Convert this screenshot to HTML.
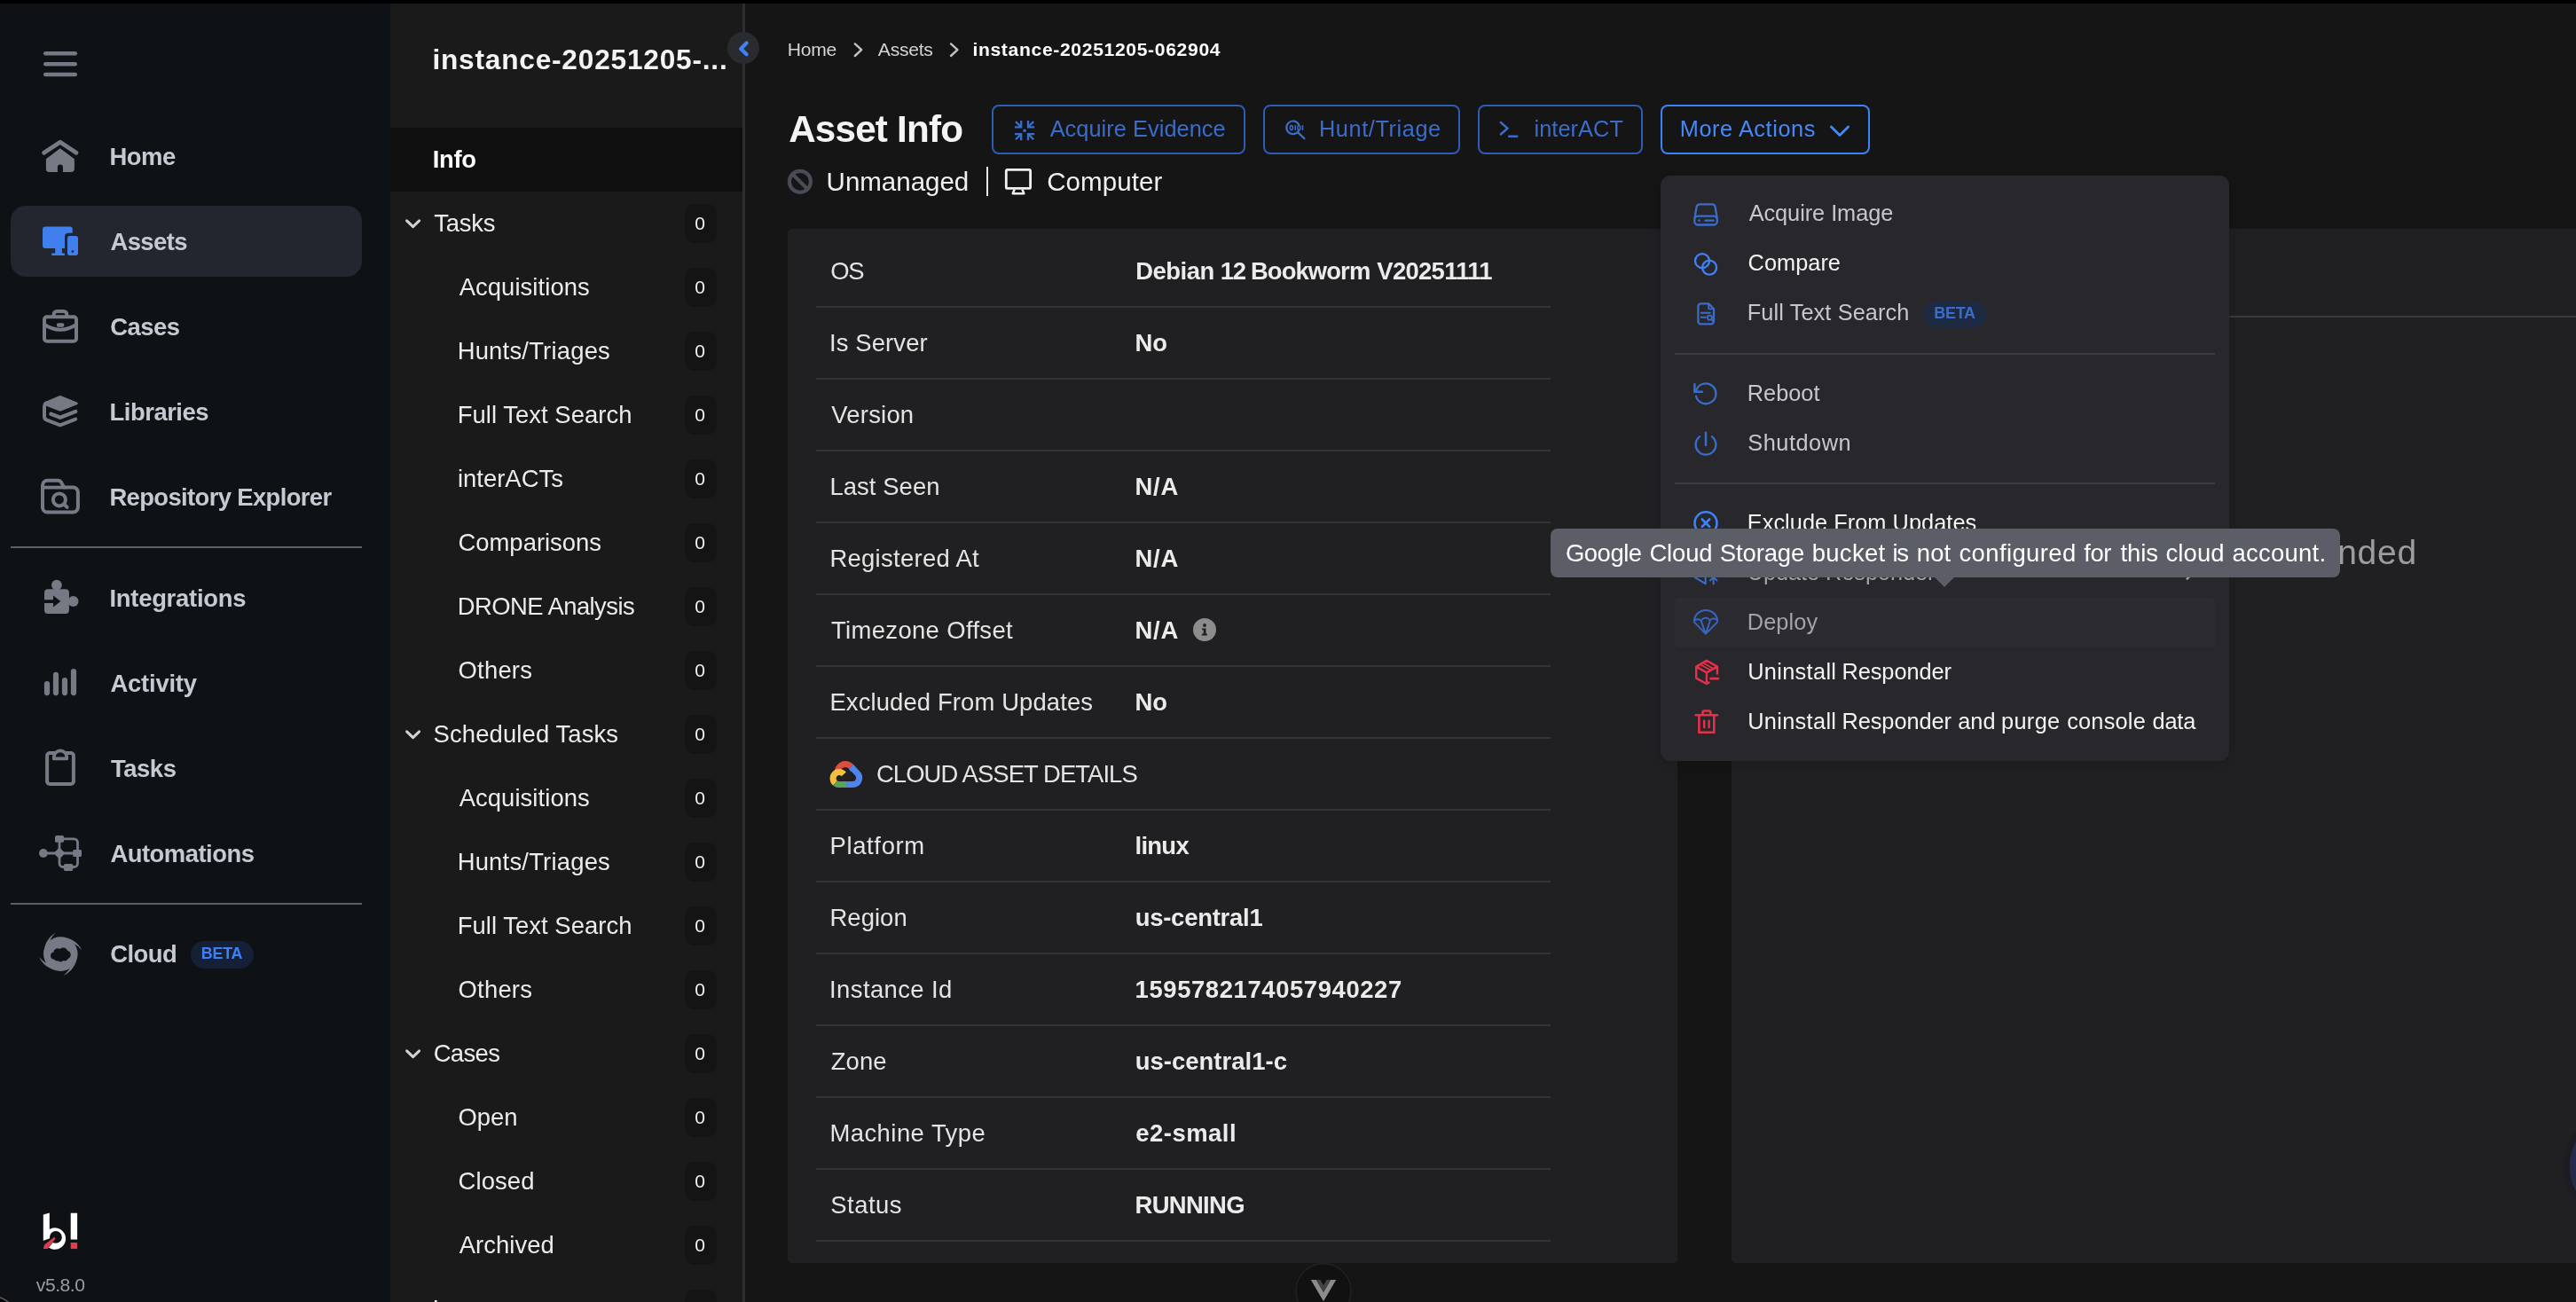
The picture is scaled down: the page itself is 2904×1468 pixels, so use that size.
<!DOCTYPE html>
<html lang="en"><head><meta charset="utf-8"><title>Asset Info</title>
<style>
*{box-sizing:border-box;margin:0;padding:0}
html,body{width:2904px;height:1468px;overflow:hidden;background:#151516}
body{font-family:"Liberation Sans",sans-serif;position:relative}
#root{position:absolute;left:0;top:0;width:2904px;height:1468px;overflow:hidden;background:#151516}
.abs{position:absolute}
.gl{position:absolute;left:0;top:0;width:2904px;height:1468px;will-change:transform}
.t{position:absolute;white-space:nowrap;line-height:1}
#side{position:absolute;left:0;top:0;width:440px;height:1468px;background:#0e1215}
#panel{position:absolute;left:440px;top:0;width:397px;height:1468px;background:#1a1a1b}
#vline{position:absolute;left:837px;top:0;width:3px;height:1468px;background:#2d2d32}
#topbar{position:absolute;left:0;top:0;width:2904px;height:4px;background:#000}
#inforow{position:absolute;left:440px;top:144px;width:397px;height:72px;background:#0f0f10}
.pill{position:absolute;left:12px;top:232px;width:396px;height:79.5px;border-radius:17px;background:#23262e}
.sdiv{position:absolute;left:12px;width:396px;height:2.4px;background:#5c5f6a}
.badge{position:absolute;left:772px;width:36px;height:44px;border-radius:10px;background:#141414}
.beta{position:absolute;border-radius:16px}
.btn{position:absolute;top:118px;height:55.5px;border:2px solid #2d5cb3;border-radius:8px}
.card{position:absolute;top:258px;height:1166px;background:#202022;border-radius:5px}
.hl{position:absolute;left:920px;width:828px;height:2px;background:#333439}
#dd{position:absolute;left:1872px;top:198px;width:641px;height:660px;border-radius:11px;background:#27272c;box-shadow:0 4px 14px rgba(0,0,0,.18)}
.sep{position:absolute;left:1888px;width:609px;height:2px;background:#3b3b41}
#hov{position:absolute;left:1888px;top:674px;width:609px;height:56.4px;border-radius:5px;background:#2b2b30}
#tip{position:absolute;left:1748px;top:595.8px;width:890px;height:55px;border-radius:8px;background:#5b5e67}
#tiparrow{position:absolute;left:2180px;top:650.3px;width:0;height:0;border-left:12.5px solid transparent;border-right:12.5px solid transparent;border-top:12.5px solid #5b5e67}
</style></head>
<body><div id="root">
<div id="side"></div>
<div id="panel"></div>
<div id="inforow"></div>
<div class="pill"></div>
<div class="sdiv" style="top:616px"></div>
<div class="sdiv" style="top:1017.6px"></div>
<div class="beta" style="left:215px;top:1061px;width:71px;height:31px;background:#152036"></div>
<div class="badge" style="top:229.8px"></div>
<svg class="abs" style="left:455px;top:246.2px" width="22" height="14" viewBox="0 0 22 14"><path d="M3.6 2.8 L10.6 9.6 L17.6 2.8" fill="none" stroke="#d2d2d2" stroke-width="3" stroke-linecap="round" stroke-linejoin="round"/></svg>
<div class="badge" style="top:301.8px"></div>
<div class="badge" style="top:373.8px"></div>
<div class="badge" style="top:445.8px"></div>
<div class="badge" style="top:517.8px"></div>
<div class="badge" style="top:589.8px"></div>
<div class="badge" style="top:661.8px"></div>
<div class="badge" style="top:733.8px"></div>
<div class="badge" style="top:805.8px"></div>
<svg class="abs" style="left:455px;top:822.2px" width="22" height="14" viewBox="0 0 22 14"><path d="M3.6 2.8 L10.6 9.6 L17.6 2.8" fill="none" stroke="#d2d2d2" stroke-width="3" stroke-linecap="round" stroke-linejoin="round"/></svg>
<div class="badge" style="top:877.8px"></div>
<div class="badge" style="top:949.8px"></div>
<div class="badge" style="top:1021.8px"></div>
<div class="badge" style="top:1093.8px"></div>
<div class="badge" style="top:1165.8px"></div>
<svg class="abs" style="left:455px;top:1182.2px" width="22" height="14" viewBox="0 0 22 14"><path d="M3.6 2.8 L10.6 9.6 L17.6 2.8" fill="none" stroke="#d2d2d2" stroke-width="3" stroke-linecap="round" stroke-linejoin="round"/></svg>
<div class="badge" style="top:1237.8px"></div>
<div class="badge" style="top:1309.8px"></div>
<div class="badge" style="top:1381.8px"></div>
<div class="badge" style="top:1453.8px"></div>
<svg class="abs" style="left:455px;top:1470.2px" width="22" height="14" viewBox="0 0 22 14"><path d="M3.6 2.8 L10.6 9.6 L17.6 2.8" fill="none" stroke="#d2d2d2" stroke-width="3" stroke-linecap="round" stroke-linejoin="round"/></svg>
<div class="card" style="left:888px;width:1003px"></div>
<div class="card" style="left:1952px;width:1000px"></div>
<div class="abs" style="left:1952px;top:356px;width:960px;height:2px;background:#38393d"></div>
<div class="hl" style="top:345px"></div>
<div class="hl" style="top:426px"></div>
<div class="hl" style="top:507px"></div>
<div class="hl" style="top:588px"></div>
<div class="hl" style="top:669px"></div>
<div class="hl" style="top:750px"></div>
<div class="hl" style="top:831px"></div>
<div class="hl" style="top:912px"></div>
<div class="hl" style="top:993px"></div>
<div class="hl" style="top:1074px"></div>
<div class="hl" style="top:1155px"></div>
<div class="hl" style="top:1236px"></div>
<div class="hl" style="top:1317px"></div>
<div class="hl" style="top:1398px"></div>
<div class="btn" style="left:1118px;width:285.6px"></div>
<div class="btn" style="left:1424px;width:222px"></div>
<div class="btn" style="left:1666px;width:186px"></div>
<div class="btn" style="left:1872px;width:236px;border-color:#3b82f6"></div>
<div class="abs" style="left:1111.6px;top:188px;width:2.5px;height:33.4px;background:#e8e8e8"></div>
<svg class="abs" style="left:0;top:0" width="2904" height="1468" viewBox="0 0 2904 1468" fill="none">
<rect x="49" y="58" width="38" height="4.6" rx="2.3" fill="#767a85"/>
<rect x="49" y="69.9" width="38" height="4.6" rx="2.3" fill="#767a85"/>
<rect x="49" y="81.7" width="38" height="4.6" rx="2.3" fill="#767a85"/>
<path d="M49.6 172.2 L67.8 160.2 L86 172.2" stroke="#767a85" stroke-width="4.8" stroke-linecap="round" stroke-linejoin="round"/>
<path d="M51.9 179.2 L67.8 167.2 L83.9 179.2 V190.2 a3.8 3.8 0 0 1 -3.8 3.8 H70.9 V188.6 a3 3 0 0 0 -6 0 V194 H55.7 a3.8 3.8 0 0 1 -3.8 -3.8 Z" fill="#767a85"/>
<rect x="48" y="255.6" width="33.8" height="24.4" rx="3.2" fill="#3f7fee"/>
<path d="M62.2 280 h7.7 v5.6 h3 v2.4 h-14.6 v-2.4 h3.9 z" fill="#3f7fee"/>
<rect x="73" y="262.8" width="18" height="28" rx="4" fill="#23262e"/>
<rect x="76" y="265.9" width="12" height="22" rx="2.6" fill="#3f7fee"/>
<rect x="80.6" y="282.2" width="2.6" height="2.6" rx="0.8" fill="#23262e"/>
<rect x="50" y="357.2" width="36" height="27.6" rx="3" stroke="#767a85" stroke-width="4"/>
<path d="M60.6 356 V354.5 a3.5 3.5 0 0 1 3.5 -3.5 h7.7 a3.5 3.5 0 0 1 3.5 3.5 V356" stroke="#767a85" stroke-width="4"/>
<path d="M50 366 Q68 377.5 86 366" stroke="#767a85" stroke-width="4"/>
<rect x="63.8" y="364.3" width="8.6" height="4.4" rx="2.2" fill="#767a85"/>
<path d="M67.8 446.8 L86.4 454.2 Q87.6 454.9 86.4 455.6 L69 462.6 Q67.8 463 66.6 462.6 L50.6 456.4 Q49 455.2 50.6 454 Z" fill="#767a85" stroke="#767a85" stroke-width="1.5" stroke-linejoin="round"/>
<path d="M52 454.5 Q50 456 50 459 V469.5 Q50 472.5 52.8 473.6 L67.8 479.4 L85.2 472.6" stroke="#767a85" stroke-width="4" stroke-linecap="round" stroke-linejoin="round"/>
<path d="M57.5 466.8 L67.8 470.8 L85.2 464" stroke="#767a85" stroke-width="4.4" stroke-linecap="round" stroke-linejoin="round"/>
<path d="M48 572.4 V547.2 a5.5 5.5 0 0 1 5.5 -5.5 h12 a4 4 0 0 1 3.4 1.9 l3.2 5.9 h10.3 a5.5 5.5 0 0 1 5.5 5.5 v17 a5.5 5.5 0 0 1 -5.5 5.5 h-28.9 a5.500 5.500 0 0 1 -5.5 -5.500 Z" stroke="#767a85" stroke-width="4" stroke-linejoin="round"/>
<path d="M48 549.6 H74" stroke="#767a85" stroke-width="3.8"/>
<circle cx="66.9" cy="563.4" r="7" stroke="#767a85" stroke-width="4"/>
<path d="M72 568.6 L75.6 571.8" stroke="#767a85" stroke-width="4" stroke-linecap="round"/>
<rect x="50" y="664.2" width="27.9" height="27.8" rx="4" fill="#767a85"/>
<circle cx="63.9" cy="659.6" r="5.9" fill="#767a85"/>
<circle cx="82.6" cy="678" r="5.9" fill="#767a85"/>
<path d="M49 676.2 H60 V671.4 L68.4 678 L60 684.6 V679.9 H49 Z" fill="#0e1215"/>
<rect x="49.9" y="767.9" width="6.2" height="16.3" rx="3.1" fill="#767a85"/>
<rect x="59.9" y="757.8" width="6.2" height="26.4" rx="3.1" fill="#767a85"/>
<rect x="69.9" y="764" width="6.2" height="20.2" rx="3.1" fill="#767a85"/>
<rect x="79.9" y="753.9" width="6.2" height="30.3" rx="3.1" fill="#767a85"/>
<rect x="53.1" y="849.1" width="29.8" height="34.9" rx="3" stroke="#767a85" stroke-width="4"/>
<path d="M60.8 855.4 V853.6 a7.2 7.2 0 0 1 14.4 0 V855.4 Z" stroke="#767a85" stroke-width="3.8" stroke-linejoin="round" fill="#0e1215"/>
<circle cx="48.9" cy="962" r="4.9" fill="#767a85"/>
<path d="M48.9 962 H87" stroke="#767a85" stroke-width="2.8"/>
<path d="M67 945.8 V973.5 a4 4 0 0 0 4 4 H83.5 a4 4 0 0 0 4 -4 V949.8 a4 4 0 0 0 -4 -4 H67" stroke="#767a85" stroke-width="2.8"/>
<rect x="62.3" y="957.3" width="9.4" height="9.4" rx="0.8" transform="rotate(45 67 962)" fill="#767a85" />
<rect x="62" y="942" width="10" height="7.8" rx="1.6" fill="#767a85"/>
<rect x="82.2" y="958" width="9.8" height="8" rx="1.6" fill="#767a85"/>
<rect x="71.9" y="973.9" width="10.3" height="8" rx="1.6" fill="#767a85"/>
<circle cx="68.3" cy="1075.6" r="19.3" fill="#767a85"/>
<path d="M49.61 1076.25 L49.57 1074.43 L49.63 1072.60 L49.81 1070.74 L50.12 1068.88 L50.58 1067.01 L51.19 1065.15 L51.96 1063.29 L52.91 1061.46 L54.03 1059.67 L55.33 1057.93 L56.82 1056.27 L58.49 1054.70 L60.35 1053.25 L62.40 1051.92 L61.70 1052.80 L61.02 1053.58 L60.38 1054.33 L59.77 1055.07 L59.20 1055.82 L58.66 1056.57 L58.17 1057.32 L57.71 1058.07 L57.28 1058.82 L56.90 1059.57 L56.55 1060.33 L56.24 1061.08 L55.97 1061.83 L55.73 1062.58 Z" fill="#767a85"/>
<path d="M68.63 1056.90 L70.45 1056.96 L72.28 1057.11 L74.12 1057.39 L75.96 1057.80 L77.80 1058.35 L79.64 1059.06 L81.45 1059.93 L83.23 1060.97 L84.96 1062.18 L86.62 1063.57 L88.20 1065.14 L89.68 1066.90 L91.04 1068.83 L92.25 1070.94 L91.41 1070.20 L90.67 1069.49 L89.96 1068.80 L89.24 1068.15 L88.53 1067.54 L87.81 1066.97 L87.09 1066.44 L86.36 1065.94 L85.63 1065.48 L84.90 1065.05 L84.17 1064.67 L83.43 1064.32 L82.69 1064.00 L81.96 1063.73 Z" fill="#767a85"/>
<path d="M86.95 1076.90 L86.80 1078.72 L86.55 1080.54 L86.18 1082.36 L85.67 1084.18 L85.02 1085.99 L84.22 1087.79 L83.26 1089.55 L82.13 1091.27 L80.83 1092.94 L79.35 1094.53 L77.70 1096.02 L75.87 1097.41 L73.87 1098.66 L71.70 1099.76 L72.48 1098.96 L73.24 1098.26 L73.96 1097.58 L74.64 1096.90 L75.29 1096.22 L75.90 1095.54 L76.47 1094.84 L77.00 1094.14 L77.50 1093.44 L77.96 1092.73 L78.39 1092.02 L78.78 1091.30 L79.13 1090.58 L79.44 1089.86 Z" fill="#767a85"/>
<path d="M67.00 1094.25 L65.18 1094.10 L63.36 1093.85 L61.54 1093.48 L59.72 1092.97 L57.91 1092.32 L56.11 1091.52 L54.35 1090.56 L52.63 1089.43 L50.96 1088.13 L49.37 1086.65 L47.88 1085.00 L46.49 1083.17 L45.24 1081.17 L44.14 1079.00 L44.94 1079.78 L45.64 1080.54 L46.32 1081.26 L47.00 1081.94 L47.68 1082.59 L48.36 1083.20 L49.06 1083.77 L49.76 1084.30 L50.46 1084.80 L51.17 1085.26 L51.88 1085.69 L52.60 1086.08 L53.32 1086.43 L54.04 1086.74 Z" fill="#767a85"/>
<path d="M61.2 1081.8 a4.2 4.2 0 0 1 -0.8 -8.3 a4.6 4.6 0 0 1 7 -3.4 a5.2 5.2 0 0 1 8.8 2 a4.6 4.6 0 0 1 0.4 8.8 a3.8 3.8 0 0 1 -5 2.2 a4.6 4.6 0 0 1 -6 0.2 a3.8 3.8 0 0 1 -4.400 -1.500 Z" fill="#0e1215"/>
<path d="M48.8 1369.6 L55.8 1367.6 V1386 a12.2 12.2 0 1 1 -3.600 18.0 L48.8 1400 Z" fill="#ffffff"/>
<circle cx="62.9" cy="1394.9" r="6.9" fill="#0e1215"/>
<path d="M47 1399.6 L62.5 1394 L63.8 1396 L52.5 1409.5 L47 1409.5 Z" fill="#0e1215"/>
<path d="M48.8 1408 L50 1403.4 L61.2 1394.8 L62.6 1396.4 L53.8 1408 Z" fill="#d8404f"/>
<rect x="79.7" y="1367.7" width="7.4" height="29.8" fill="#ffffff"/>
<rect x="79.7" y="1401" width="7.4" height="7.1" fill="#d8404f"/>
<path d="M963.8000000000001 49.4 L971.2 56.2 L963.8000000000001 63" stroke="#c2c2c2" stroke-width="2.4" stroke-linecap="round" stroke-linejoin="round"/>
<path d="M1072.0 49.4 L1079.3999999999999 56.2 L1072.0 63" stroke="#c2c2c2" stroke-width="2.4" stroke-linecap="round" stroke-linejoin="round"/>
<path d="M1144.00 143.30 H1151.20 V136.10 M1151.20 143.30 L1145.00 137.10" stroke="#3a6dcb" stroke-width="2.3" stroke-linecap="butt" stroke-linejoin="miter"/>
<path d="M1144.00 151.10 H1151.20 V158.30 M1151.20 151.10 L1145.00 157.30" stroke="#3a6dcb" stroke-width="2.3" stroke-linecap="butt" stroke-linejoin="miter"/>
<path d="M1166.20 143.30 H1159.00 V136.10 M1159.00 143.30 L1165.20 137.10" stroke="#3a6dcb" stroke-width="2.3" stroke-linecap="butt" stroke-linejoin="miter"/>
<path d="M1166.20 151.10 H1159.00 V158.30 M1159.00 151.10 L1165.20 157.30" stroke="#3a6dcb" stroke-width="2.3" stroke-linecap="butt" stroke-linejoin="miter"/>
<circle cx="1155.1" cy="147.2" r="1.8" fill="#3a6dcb"/>
<path d="M1464.22 146.89 A7.30 7.30 0 1 1 1464.05 140.37" stroke="#3a6dcb" stroke-width="2.2" stroke-linecap="round"/>
<path d="M1463.4 149.6 L1470.4 156.2" stroke="#3a6dcb" stroke-width="2.3" stroke-linecap="round"/>
<ellipse cx="1455.9" cy="144" rx="1.5" ry="2.6" stroke="#3a6dcb" stroke-width="1.5"/>
<path d="M1460.2 141.2 V146.8" stroke="#3a6dcb" stroke-width="1.6"/>
<ellipse cx="1464.4" cy="144" rx="1.5" ry="2.6" stroke="#3a6dcb" stroke-width="1.5"/>
<path d="M1468.5 141.2 V146.8" stroke="#3a6dcb" stroke-width="1.6"/>
<path d="M1691.8 138 L1699.4 144.7 L1691.8 151.5" stroke="#3a6dcb" stroke-width="2.4" stroke-linecap="round" stroke-linejoin="miter"/>
<path d="M1701.2 153.7 H1710.2" stroke="#3a6dcb" stroke-width="2.6" stroke-linecap="round"/>
<path d="M2064.4 143 L2074 152.4 L2083.6 143" stroke="#4489f7" stroke-width="2.8" stroke-linecap="round" stroke-linejoin="round"/>
<circle cx="901.9" cy="204.8" r="12" stroke="#4a4c55" stroke-width="4.2"/>
<path d="M893.4 196.3 L910.4 213.3" stroke="#4a4c55" stroke-width="4.2"/>
<rect x="1134.3" y="191.3" width="27.3" height="21.100" rx="1.5" stroke="#f0f0f0" stroke-width="2.8"/>
<path d="M1143.6 213.6 L1141.8 218.3 H1154.3 L1152.500 213.6" stroke="#f0f0f0" stroke-width="2.600" stroke-linejoin="round"/>
<circle cx="1358" cy="710" r="13" fill="#8c8c8c"/>
<circle cx="1358" cy="705" r="1.9" fill="#202022"/>
<path d="M1355 708.400 H1359.500 V714.600 H1360.800 V716.400 H1354.900 V714.600 H1356.700 V710.200 H1355 Z" fill="#202022"/>
<path d="M944.43 871.71 A8.70 8.70 0 0 1 959.66 864.61" stroke="#db4f3d" stroke-width="7"/>
<path d="M959.57 864.49 A8.70 8.70 0 0 1 961.62 868.99" stroke="#4f84ec" stroke-width="7"/>
<path d="M959.66 864.61 L966.02 871.35 A7.5 7.5 0 0 1 961.20 884.60 H954.10" stroke="#4f84ec" stroke-width="7" stroke-linejoin="round"/>
<path d="M954.20 884.60 H946.10 A7 7 0 0 1 941.79 883.12" stroke="#57a55c" stroke-width="7"/>
<path d="M941.60 882.96 A7.00 7.00 0 1 1 951.30 872.92" stroke="#f4bf3f" stroke-width="7"/>
<circle cx="1492" cy="1455.8" r="31" fill="#111111" stroke="#232323" stroke-width="1.4"/>
<path d="M1477.8 1443 H1483.800 L1492 1457 L1500.200 1443 H1506.200 L1492 1467.200 Z" fill="#8c8c8c"/>
<path d="M1483.8 1443 H1488.400 L1492 1449.200 L1495.600 1443 H1500.200 L1492 1457 Z" fill="#444444"/>
<circle cx="2954" cy="1315" r="64" fill="#1c1d22"/>
<circle cx="2954" cy="1315" r="57.3" fill="#222b49"/>
<path d="M-1 1462.6 Q5 1464.6 10.5 1469 L-1 1469 Z" fill="#000"/>
<path d="M-1 1462.6 Q5 1464.6 10.5 1469" stroke="#5a5c60" stroke-width="1.6"/>
</svg>
<div class="gl"><span id="t0" class="t" style="left:123.45px;top:162.82px;font-size:27.43px;font-weight:700;color:#c6c9d2;letter-spacing:-0.458px;">Home</span>
<span id="t1" class="t" style="left:124.42px;top:258.82px;font-size:27.43px;font-weight:700;color:#c6c9d2;letter-spacing:-0.559px;">Assets</span>
<span id="t2" class="t" style="left:124.23px;top:354.82px;font-size:27.43px;font-weight:700;color:#c6c9d2;letter-spacing:-0.537px;">Cases</span>
<span id="t3" class="t" style="left:123.45px;top:450.82px;font-size:27.43px;font-weight:700;color:#c6c9d2;letter-spacing:-0.463px;">Libraries</span>
<span id="t4" class="t" style="left:123.45px;top:546.82px;font-size:27.43px;font-weight:700;color:#c6c9d2;letter-spacing:-0.632px;">Repository Explorer</span>
<span id="t5" class="t" style="left:123.45px;top:660.72px;font-size:27.43px;font-weight:700;color:#c6c9d2;letter-spacing:-0.263px;">Integrations</span>
<span id="t6" class="t" style="left:124.42px;top:756.72px;font-size:27.43px;font-weight:700;color:#c6c9d2;letter-spacing:-0.205px;">Activity</span>
<span id="t7" class="t" style="left:125.07px;top:852.72px;font-size:27.43px;font-weight:700;color:#c6c9d2;letter-spacing:-0.468px;">Tasks</span>
<span id="t8" class="t" style="left:124.42px;top:948.72px;font-size:27.43px;font-weight:700;color:#c6c9d2;letter-spacing:-0.508px;">Automations</span>
<span id="t9" class="t" style="left:124.23px;top:1062.42px;font-size:27.43px;font-weight:700;color:#c6c9d2;letter-spacing:-0.563px;">Cloud</span>
<span id="t10" class="t" style="left:226.68px;top:1067.39px;font-size:17.93px;font-weight:700;color:#3b82f6;letter-spacing:-0.194px;">BETA</span>
<span id="t11" class="t" style="left:40.84px;top:1438.40px;font-size:21.1px;font-weight:400;color:#9a9da6;letter-spacing:-0.456px;">v5.8.0</span>
<span id="t12" class="t" style="left:487.38px;top:52.40px;font-size:31.65px;font-weight:700;color:#f4f4f4;letter-spacing:0.787px;">instance-20251205-...</span>
<span id="t13" class="t" style="left:487.65px;top:165.52px;font-size:27.43px;font-weight:700;color:#ffffff;letter-spacing:-0.270px;">Info</span>
<span id="t14" class="t" style="left:489.37px;top:237.82px;font-size:27.43px;font-weight:400;color:#ececec;letter-spacing:-0.261px;">Tasks</span>
<span id="t15" class="t" style="left:783.14px;top:241.30px;font-size:21.1px;font-weight:400;color:#f0f0f0;letter-spacing:0.000px;">0</span>
<span id="t16" class="t" style="left:517.65px;top:309.82px;font-size:27.43px;font-weight:400;color:#ececec;letter-spacing:0.070px;">Acquisitions</span>
<span id="t17" class="t" style="left:783.14px;top:313.30px;font-size:21.1px;font-weight:400;color:#f0f0f0;letter-spacing:0.000px;">0</span>
<span id="t18" class="t" style="left:515.65px;top:381.82px;font-size:27.43px;font-weight:400;color:#ececec;letter-spacing:0.208px;">Hunts/Triages</span>
<span id="t19" class="t" style="left:783.14px;top:385.30px;font-size:21.1px;font-weight:400;color:#f0f0f0;letter-spacing:0.000px;">0</span>
<span id="t20" class="t" style="left:515.65px;top:453.82px;font-size:27.43px;font-weight:400;color:#ececec;letter-spacing:0.050px;">Full Text Search</span>
<span id="t21" class="t" style="left:783.14px;top:457.30px;font-size:21.1px;font-weight:400;color:#f0f0f0;letter-spacing:0.000px;">0</span>
<span id="t22" class="t" style="left:515.95px;top:525.82px;font-size:27.43px;font-weight:400;color:#ececec;letter-spacing:0.013px;">interACTs</span>
<span id="t23" class="t" style="left:783.14px;top:529.30px;font-size:21.1px;font-weight:400;color:#f0f0f0;letter-spacing:0.000px;">0</span>
<span id="t24" class="t" style="left:516.48px;top:597.82px;font-size:27.43px;font-weight:400;color:#ececec;letter-spacing:0.003px;">Comparisons</span>
<span id="t25" class="t" style="left:783.14px;top:601.30px;font-size:21.1px;font-weight:400;color:#f0f0f0;letter-spacing:0.000px;">0</span>
<span id="t26" class="t" style="left:515.65px;top:669.82px;font-size:27.43px;font-weight:400;color:#ececec;letter-spacing:-0.554px;">DRONE Analysis</span>
<span id="t27" class="t" style="left:783.14px;top:673.30px;font-size:21.1px;font-weight:400;color:#f0f0f0;letter-spacing:0.000px;">0</span>
<span id="t28" class="t" style="left:516.57px;top:741.82px;font-size:27.43px;font-weight:400;color:#ececec;letter-spacing:0.209px;">Others</span>
<span id="t29" class="t" style="left:783.14px;top:745.30px;font-size:21.1px;font-weight:400;color:#f0f0f0;letter-spacing:0.000px;">0</span>
<span id="t30" class="t" style="left:488.60px;top:813.82px;font-size:27.43px;font-weight:400;color:#ececec;letter-spacing:0.117px;">Scheduled Tasks</span>
<span id="t31" class="t" style="left:783.14px;top:817.30px;font-size:21.1px;font-weight:400;color:#f0f0f0;letter-spacing:0.000px;">0</span>
<span id="t32" class="t" style="left:517.65px;top:885.82px;font-size:27.43px;font-weight:400;color:#ececec;letter-spacing:0.070px;">Acquisitions</span>
<span id="t33" class="t" style="left:783.14px;top:889.30px;font-size:21.1px;font-weight:400;color:#f0f0f0;letter-spacing:0.000px;">0</span>
<span id="t34" class="t" style="left:515.65px;top:957.82px;font-size:27.43px;font-weight:400;color:#ececec;letter-spacing:0.208px;">Hunts/Triages</span>
<span id="t35" class="t" style="left:783.14px;top:961.30px;font-size:21.1px;font-weight:400;color:#f0f0f0;letter-spacing:0.000px;">0</span>
<span id="t36" class="t" style="left:515.65px;top:1029.82px;font-size:27.43px;font-weight:400;color:#ececec;letter-spacing:0.050px;">Full Text Search</span>
<span id="t37" class="t" style="left:783.14px;top:1033.30px;font-size:21.1px;font-weight:400;color:#f0f0f0;letter-spacing:0.000px;">0</span>
<span id="t38" class="t" style="left:516.57px;top:1101.82px;font-size:27.43px;font-weight:400;color:#ececec;letter-spacing:0.209px;">Others</span>
<span id="t39" class="t" style="left:783.14px;top:1105.30px;font-size:21.1px;font-weight:400;color:#f0f0f0;letter-spacing:0.000px;">0</span>
<span id="t40" class="t" style="left:488.68px;top:1173.82px;font-size:27.43px;font-weight:400;color:#ececec;letter-spacing:-0.635px;">Cases</span>
<span id="t41" class="t" style="left:783.14px;top:1177.30px;font-size:21.1px;font-weight:400;color:#f0f0f0;letter-spacing:0.000px;">0</span>
<span id="t42" class="t" style="left:516.57px;top:1245.82px;font-size:27.43px;font-weight:400;color:#ececec;letter-spacing:-0.085px;">Open</span>
<span id="t43" class="t" style="left:783.14px;top:1249.30px;font-size:21.1px;font-weight:400;color:#f0f0f0;letter-spacing:0.000px;">0</span>
<span id="t44" class="t" style="left:516.48px;top:1317.82px;font-size:27.43px;font-weight:400;color:#ececec;letter-spacing:0.134px;">Closed</span>
<span id="t45" class="t" style="left:783.14px;top:1321.30px;font-size:21.1px;font-weight:400;color:#f0f0f0;letter-spacing:0.000px;">0</span>
<span id="t46" class="t" style="left:517.65px;top:1389.82px;font-size:27.43px;font-weight:400;color:#ececec;letter-spacing:0.072px;">Archived</span>
<span id="t47" class="t" style="left:783.14px;top:1393.30px;font-size:21.1px;font-weight:400;color:#f0f0f0;letter-spacing:0.000px;">0</span>
<span id="t48" class="t" style="left:487.85px;top:1461.82px;font-size:27.43px;font-weight:400;color:#ececec;letter-spacing:0.942px;">Logs</span>
<span id="t49" class="t" style="left:783.14px;top:1465.30px;font-size:21.1px;font-weight:400;color:#f0f0f0;letter-spacing:0.000px;">0</span>
<span id="t50" class="t" style="left:887.82px;top:45.10px;font-size:21.1px;font-weight:400;color:#d4d4d4;letter-spacing:-0.266px;">Home</span>
<span id="t51" class="t" style="left:989.84px;top:45.10px;font-size:21.1px;font-weight:400;color:#d4d4d4;letter-spacing:-0.248px;">Assets</span>
<span id="t52" class="t" style="left:1096.40px;top:45.10px;font-size:21.1px;font-weight:700;color:#ffffff;letter-spacing:0.663px;">instance-20251205-062904</span>
<span id="t53" class="t" style="left:889.16px;top:124.69px;font-size:42.2px;font-weight:700;color:#f4f4f4;letter-spacing:-0.799px;">Asset Info</span>
<span id="t54" class="t" style="left:1183.65px;top:132.88px;font-size:25.32px;font-weight:400;color:#3a6dcb;letter-spacing:0.065px;">Acquire Evidence</span>
<span id="t55" class="t" style="left:1486.98px;top:132.88px;font-size:25.32px;font-weight:400;color:#3a6dcb;letter-spacing:0.585px;">Hunt/Triage</span>
<span id="t56" class="t" style="left:1729.48px;top:132.88px;font-size:25.32px;font-weight:400;color:#3a6dcb;letter-spacing:0.074px;">interACT</span>
<span id="t57" class="t" style="left:1893.78px;top:132.88px;font-size:25.32px;font-weight:400;color:#4489f7;letter-spacing:0.569px;">More Actions</span>
<span id="t58" class="t" style="left:931.61px;top:189.86px;font-size:29.54px;font-weight:400;color:#f0f0f0;letter-spacing:-0.034px;">Unmanaged</span>
<span id="t59" class="t" style="left:1180.13px;top:189.86px;font-size:29.54px;font-weight:400;color:#f0f0f0;letter-spacing:0.083px;">Computer</span>
<span id="t60" class="t" style="left:936.37px;top:291.82px;font-size:27.43px;font-weight:400;color:#e4e4e4;letter-spacing:-1.400px;">OS</span>
<span id="t61" class="t" style="left:1280.25px;top:291.82px;font-size:27.43px;font-weight:700;color:#ebebeb;letter-spacing:-0.498px;">Debian </span>
<span id="t62" class="t" style="left:1375.82px;top:291.82px;font-size:27.43px;font-weight:700;color:#ebebeb;letter-spacing:-1.400px;">12 </span>
<span id="t63" class="t" style="left:1409.95px;top:291.82px;font-size:27.43px;font-weight:700;color:#ebebeb;letter-spacing:-0.908px;">Bookworm </span>
<span id="t64" class="t" style="left:1552.33px;top:291.82px;font-size:27.43px;font-weight:700;color:#ebebeb;letter-spacing:-0.689px;">V20251111</span>
<span id="t65" class="t" style="left:935.09px;top:372.82px;font-size:27.43px;font-weight:400;color:#e4e4e4;letter-spacing:0.106px;">Is Server</span>
<span id="t66" class="t" style="left:1279.55px;top:372.82px;font-size:27.43px;font-weight:700;color:#ebebeb;letter-spacing:-0.182px;">No</span>
<span id="t67" class="t" style="left:937.37px;top:453.82px;font-size:27.43px;font-weight:400;color:#e4e4e4;letter-spacing:0.215px;">Version</span>
<span id="t68" class="t" style="left:935.45px;top:534.82px;font-size:27.43px;font-weight:400;color:#e4e4e4;letter-spacing:0.067px;">Last Seen</span>
<span id="t69" class="t" style="left:1279.55px;top:534.82px;font-size:27.43px;font-weight:700;color:#ebebeb;letter-spacing:0.742px;">N/A</span>
<span id="t70" class="t" style="left:935.45px;top:615.82px;font-size:27.43px;font-weight:400;color:#e4e4e4;letter-spacing:0.293px;">Registered At</span>
<span id="t71" class="t" style="left:1279.55px;top:615.82px;font-size:27.43px;font-weight:700;color:#ebebeb;letter-spacing:0.742px;">N/A</span>
<span id="t72" class="t" style="left:936.97px;top:696.82px;font-size:27.43px;font-weight:400;color:#e4e4e4;letter-spacing:0.360px;">Timezone Offset</span>
<span id="t73" class="t" style="left:1279.55px;top:696.82px;font-size:27.43px;font-weight:700;color:#ebebeb;letter-spacing:0.742px;">N/A</span>
<span id="t74" class="t" style="left:935.45px;top:777.82px;font-size:27.43px;font-weight:400;color:#e4e4e4;letter-spacing:0.124px;">Excluded From Updates</span>
<span id="t75" class="t" style="left:1279.55px;top:777.82px;font-size:27.43px;font-weight:700;color:#ebebeb;letter-spacing:-0.182px;">No</span>
<span id="t76" class="t" style="left:987.98px;top:858.82px;font-size:27.43px;font-weight:400;color:#e4e4e4;letter-spacing:-0.923px;">CLOUD ASSET DETAILS</span>
<span id="t77" class="t" style="left:935.45px;top:939.82px;font-size:27.43px;font-weight:400;color:#e4e4e4;letter-spacing:0.667px;">Platform</span>
<span id="t78" class="t" style="left:1279.49px;top:939.82px;font-size:27.43px;font-weight:700;color:#ebebeb;letter-spacing:-0.704px;">linux</span>
<span id="t79" class="t" style="left:935.45px;top:1020.82px;font-size:27.43px;font-weight:400;color:#e4e4e4;letter-spacing:0.072px;">Region</span>
<span id="t80" class="t" style="left:1279.65px;top:1020.82px;font-size:27.43px;font-weight:700;color:#ebebeb;letter-spacing:-0.220px;">us-central1</span>
<span id="t81" class="t" style="left:935.09px;top:1101.82px;font-size:27.43px;font-weight:400;color:#e4e4e4;letter-spacing:0.409px;">Instance Id</span>
<span id="t82" class="t" style="left:1279.62px;top:1101.82px;font-size:27.43px;font-weight:700;color:#ebebeb;letter-spacing:0.602px;">1595782174057940227</span>
<span id="t83" class="t" style="left:936.72px;top:1182.82px;font-size:27.43px;font-weight:400;color:#e4e4e4;letter-spacing:0.078px;">Zone</span>
<span id="t84" class="t" style="left:1279.65px;top:1182.82px;font-size:27.43px;font-weight:700;color:#ebebeb;letter-spacing:0.046px;">us-central1-c</span>
<span id="t85" class="t" style="left:935.45px;top:1263.82px;font-size:27.43px;font-weight:400;color:#e4e4e4;letter-spacing:0.459px;">Machine Type</span>
<span id="t86" class="t" style="left:1280.37px;top:1263.82px;font-size:27.43px;font-weight:700;color:#ebebeb;letter-spacing:0.488px;">e2-small</span>
<span id="t87" class="t" style="left:936.20px;top:1344.82px;font-size:27.43px;font-weight:400;color:#e4e4e4;letter-spacing:0.528px;">Status</span>
<span id="t88" class="t" style="left:1279.55px;top:1344.82px;font-size:27.43px;font-weight:700;color:#ebebeb;letter-spacing:-0.665px;">RUNNING</span>
<span id="t89" class="t" style="top:603.39px;font-size:39.03px;font-weight:400;color:#9c9c9f;letter-spacing:0.000px;right:179.1px;letter-spacing:0.733px;">Not Recommended</span></div>
<div id="vline"></div>
<svg class="abs" style="left:0;top:0" width="2904" height="1468" viewBox="0 0 2904 1468" fill="none">
<circle cx="838" cy="54" r="18" fill="#2a2b2f"/>
<path d="M841.6 48.6 L835.2 55 L841.6 61.2" stroke="#3f82f5" stroke-width="4.2" stroke-linecap="round" stroke-linejoin="round"/>
</svg>
<div id="dd"></div>
<div class="sep" style="top:398.3px"></div>
<div class="sep" style="top:543.8px"></div>
<div id="hov"></div>
<div class="beta" style="left:2168px;top:338.6px;width:71px;height:31px;background:#1e2a42"></div>
<svg class="abs" style="left:0;top:0" width="2904" height="1468" viewBox="0 0 2904 1468" fill="none">
<path d="M1910.4 246.5 L1912.6 233.2 a3.6 3.6 0 0 1 3.5 -2.900 h14 a3.6 3.6 0 0 1 3.5 2.900 L1935.800 246.5" stroke="#3a6dcb" stroke-width="2.3"/>
<rect x="1910.3" y="243.6" width="25.5" height="9.900" rx="4" stroke="#3a6dcb" stroke-width="2.3"/>
<circle cx="1915.5" cy="248.6" r="1.3" fill="#3a6dcb"/>
<path d="M1922.6 248.600 H1931.600" stroke="#3a6dcb" stroke-width="2.4" stroke-linecap="round"/>
<circle cx="1919" cy="294.1" r="8" stroke="#3f82f5" stroke-width="2.3"/>
<circle cx="1927.1" cy="301.7" r="8" stroke="#3f82f5" stroke-width="2.3"/>
<path d="M1926.2 342.4 H1917.4 a3 3 0 0 0 -3 3 V362.400 a3 3 0 0 0 3 3 H1929 a3 3 0 0 0 3 -3 V348.300 Z" stroke="#3a6dcb" stroke-width="2.3" stroke-linejoin="round"/>
<path d="M1926.2 342.4 V348.300 H1932" stroke="#3a6dcb" stroke-width="1.8" stroke-linejoin="round"/>
<path d="M1917 352.700 H1928.600 M1917 357.700 H1923.600" stroke="#3a6dcb" stroke-width="2"/>
<circle cx="1927.4" cy="358.2" r="2.500" stroke="#3a6dcb" stroke-width="1.800"/>
<path d="M1929.2 360.2 L1931 362" stroke="#3a6dcb" stroke-width="1.800" stroke-linecap="round"/>
<path d="M1912.04 440.66 A11.40 11.40 0 1 1 1911.99 446.75" stroke="#3a6dcb" stroke-width="2.3" stroke-linecap="round"/>
<path d="M1910.4 433.200 V441.800 H1918.800" stroke="#3a6dcb" stroke-width="2.5" stroke-linecap="round" stroke-linejoin="miter"/>
<path d="M1930.02 492.32 A11.40 11.40 0 1 1 1915.98 492.32" stroke="#3a6dcb" stroke-width="2.3" stroke-linecap="round"/>
<path d="M1923 487.800 V502" stroke="#3a6dcb" stroke-width="2.5" stroke-linecap="round"/>
<circle cx="1923" cy="589.7" r="12.5" stroke="#3f82f5" stroke-width="2.600"/>
<path d="M1918.8 585.500 L1927.200 593.900 M1927.200 585.500 L1918.800 593.900" stroke="#3f82f5" stroke-width="2.700" stroke-linecap="round"/>
<path d="M1911.2 640 L1922.700 633.500 L1934 640 V648 M1911.200 640 V651.400 L1922.700 658.200 V646.600 L1911.200 640 M1922.700 646.600 L1934 640" stroke="#3a6dcb" stroke-width="2.100" stroke-linejoin="round"/>
<path d="M1931.7 658.400 V651.200 M1927.900 654.400 L1931.700 650.800 L1935.500 654.400" stroke="#3a6dcb" stroke-width="2" stroke-linecap="round" stroke-linejoin="round"/>
<path d="M2465.6 638.8 L2472.600 645.700 L2465.600 652.600" stroke="#a3a3a9" stroke-width="2.400" stroke-linecap="round" stroke-linejoin="round"/>
<path d="M1909.8 701.2 A13.2 13.2 0 0 1 1936.200 701.2" stroke="#3565c0" stroke-width="2.100"/>
<path d="M1909.8 701.2 a4.2 3.4 0 0 1 8.200 -0.400 a4.8 4 0 0 1 9.600 0 a4.2 3.4 0 0 1 8.600 0.400" stroke="#3565c0" stroke-width="2"/>
<path d="M1909.8 701.2 L1922.900 714.600 L1936.200 701.200 M1918 700.800 L1922.900 714.600 L1927.600 700.800" stroke="#3565c0" stroke-width="2" stroke-linejoin="round"/>
<path d="M1912.2 751.600 L1923.900 744.800 L1935.900 751.600 V759.600 M1912.200 751.600 V764.600 L1923.900 771 L1926.600 769.400 M1912.200 751.600 L1923.900 758.400 L1935.900 751.600 M1923.900 758.400 V771" stroke="#e5304a" stroke-width="2.400" stroke-linejoin="round" stroke-linecap="round"/>
<path d="M1916.6 749 L1928.400 755.800 M1919.800 747.200 L1931.600 754" stroke="#e5304a" stroke-width="1.800"/>
<path d="M1928.4 765.100 H1937" stroke="#e5304a" stroke-width="2.600" stroke-linecap="round"/>
<path d="M1911.8 806.300 H1935.900" stroke="#e5304a" stroke-width="2.600" stroke-linecap="round"/>
<path d="M1919.4 806 V803.400 a2 2 0 0 1 2 -2 h5 a2 2 0 0 1 2 2 V806" stroke="#e5304a" stroke-width="2.500"/>
<path d="M1915.4 806.300 V825.800 H1932.300 V806.300" stroke="#e5304a" stroke-width="2.600" stroke-linejoin="miter"/>
<path d="M1921.2 812.600 V820 M1926.600 812.600 V820" stroke="#e5304a" stroke-width="2.400" stroke-linecap="round"/>
</svg>
<div class="gl"><span id="t90" class="t" style="left:1971.65px;top:228.28px;font-size:25.32px;font-weight:400;color:#c6c6cb;letter-spacing:-0.046px;">Acquire Image</span>
<span id="t91" class="t" style="left:1970.60px;top:284.48px;font-size:25.32px;font-weight:400;color:#f4f4f4;letter-spacing:0.038px;">Compare</span>
<span id="t92" class="t" style="left:1969.78px;top:340.48px;font-size:25.32px;font-weight:400;color:#c6c6cb;letter-spacing:0.106px;">Full Text Search</span>
<span id="t93" class="t" style="left:1969.78px;top:430.88px;font-size:25.32px;font-weight:400;color:#c6c6cb;letter-spacing:0.004px;">Reboot</span>
<span id="t94" class="t" style="left:1970.35px;top:486.98px;font-size:25.32px;font-weight:400;color:#c6c6cb;letter-spacing:0.517px;">Shutdown</span>
<span id="t95" class="t" style="left:1969.78px;top:576.88px;font-size:25.32px;font-weight:400;color:#f4f4f4;letter-spacing:0.050px;">Exclude From Updates</span>
<span id="t96" class="t" style="left:1969.85px;top:632.98px;font-size:25.32px;font-weight:400;color:#a3a3a9;letter-spacing:-0.061px;">Update Responder</span>
<span id="t97" class="t" style="left:1969.78px;top:689.28px;font-size:25.32px;font-weight:400;color:#a3a3a9;letter-spacing:0.096px;">Deploy</span>
<span id="t98" class="t" style="left:1970.15px;top:745.18px;font-size:25.32px;font-weight:400;color:#f4f4f4;letter-spacing:0.345px;">Uninstall </span>
<span id="t99" class="t" style="left:2076.48px;top:745.18px;font-size:25.32px;font-weight:400;color:#f4f4f4;letter-spacing:-0.039px;">Responder</span>
<span id="t100" class="t" style="left:1970.15px;top:801.38px;font-size:25.32px;font-weight:400;color:#f4f4f4;letter-spacing:0.345px;">Uninstall </span>
<span id="t101" class="t" style="left:2076.48px;top:801.38px;font-size:25.32px;font-weight:400;color:#f4f4f4;letter-spacing:-0.039px;">Responder </span>
<span id="t102" class="t" style="left:2207.26px;top:801.38px;font-size:25.32px;font-weight:400;color:#f4f4f4;letter-spacing:0.029px;">and </span>
<span id="t103" class="t" style="left:2256.02px;top:801.38px;font-size:25.32px;font-weight:400;color:#f4f4f4;letter-spacing:0.350px;">purge </span>
<span id="t104" class="t" style="left:2330.16px;top:801.38px;font-size:25.32px;font-weight:400;color:#f4f4f4;letter-spacing:0.229px;">console </span>
<span id="t105" class="t" style="left:2426.48px;top:801.38px;font-size:25.32px;font-weight:400;color:#f4f4f4;letter-spacing:-0.144px;">data</span>
<span id="t106" class="t" style="left:2180.18px;top:344.59px;font-size:17.93px;font-weight:700;color:#3a6dcb;letter-spacing:-0.194px;">BETA</span></div>
<div id="tip"></div><div id="tiparrow"></div>
<div class="gl"><span id="t107" class="t" style="left:1764.90px;top:609.92px;font-size:27.43px;font-weight:400;color:#ffffff;letter-spacing:-0.438px;">Google </span>
<span id="t108" class="t" style="left:1859.48px;top:609.92px;font-size:27.43px;font-weight:400;color:#ffffff;letter-spacing:-0.162px;">Cloud </span>
<span id="t109" class="t" style="left:1938.80px;top:609.92px;font-size:27.43px;font-weight:400;color:#ffffff;letter-spacing:-0.105px;">Storage </span>
<span id="t110" class="t" style="left:2042.73px;top:609.92px;font-size:27.43px;font-weight:400;color:#ffffff;letter-spacing:0.323px;">bucket </span>
<span id="t111" class="t" style="left:2133.55px;top:609.92px;font-size:27.43px;font-weight:400;color:#ffffff;letter-spacing:-1.334px;">is </span>
<span id="t112" class="t" style="left:2160.82px;top:609.92px;font-size:27.43px;font-weight:400;color:#ffffff;letter-spacing:0.082px;">not </span>
<span id="t113" class="t" style="left:2208.44px;top:609.92px;font-size:27.43px;font-weight:400;color:#ffffff;letter-spacing:0.414px;">configured </span>
<span id="t114" class="t" style="left:2349.25px;top:609.92px;font-size:27.43px;font-weight:400;color:#ffffff;letter-spacing:-0.373px;">for </span>
<span id="t115" class="t" style="left:2390.45px;top:609.92px;font-size:27.43px;font-weight:400;color:#ffffff;letter-spacing:-0.013px;">this </span>
<span id="t116" class="t" style="left:2441.59px;top:609.92px;font-size:27.43px;font-weight:400;color:#ffffff;letter-spacing:0.085px;">cloud </span>
<span id="t117" class="t" style="left:2516.58px;top:609.92px;font-size:27.43px;font-weight:400;color:#ffffff;letter-spacing:0.265px;">account.</span></div>
<div id="topbar"></div>
</div></body></html>
